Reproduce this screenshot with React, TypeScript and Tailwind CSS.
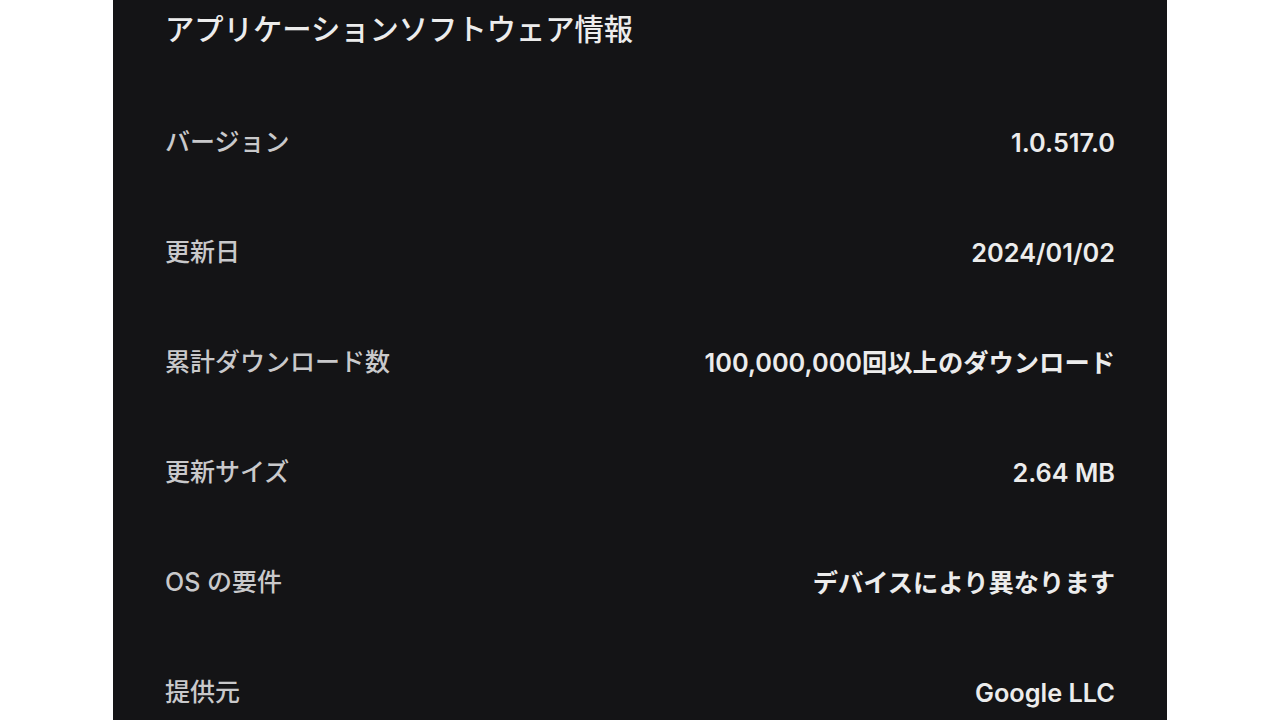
const rows = [
  { label: 'バージョン', value: '1.0.517.0' },
  { label: '更新日', value: '2024/01/02' },
  { label: '累計ダウンロード数', value: '100,000,000回以上のダウンロード' },
  { label: '更新サイズ', value: '2.64 MB' },
  { label: 'OS の要件', value: 'デバイスにより異なります' },
  { label: '提供元', value: 'Google LLC' },
];

export default function App() {
  return (
    <div
      className="w-full h-[720px] bg-white flex justify-center overflow-hidden"
      style={{ fontFamily: 'Inter, "Noto Sans CJK JP", sans-serif' }}
    >
      <div className="w-[1054px] h-full bg-[#141416] px-[52px] pt-[2px]">
        {/* タイトル */}
        <div className="h-[56px] flex items-center">
          <h1 className="text-[29.3px] font-medium text-[#ececec]">
            アプリケーションソフトウェア情報
          </h1>
        </div>

        {/* 情報リスト */}
        <div className="mt-[30px] flex flex-col">
          {rows.map((row) => (
            <div key={row.label} className="h-[110px] flex items-center justify-between">
              <span className="text-[25px] font-medium text-[#c9c9cb]">{row.label}</span>
              <span className="text-[25.3px] font-semibold text-[#ececec]">{row.value}</span>
            </div>
          ))}
        </div>
      </div>
    </div>
  );
}
